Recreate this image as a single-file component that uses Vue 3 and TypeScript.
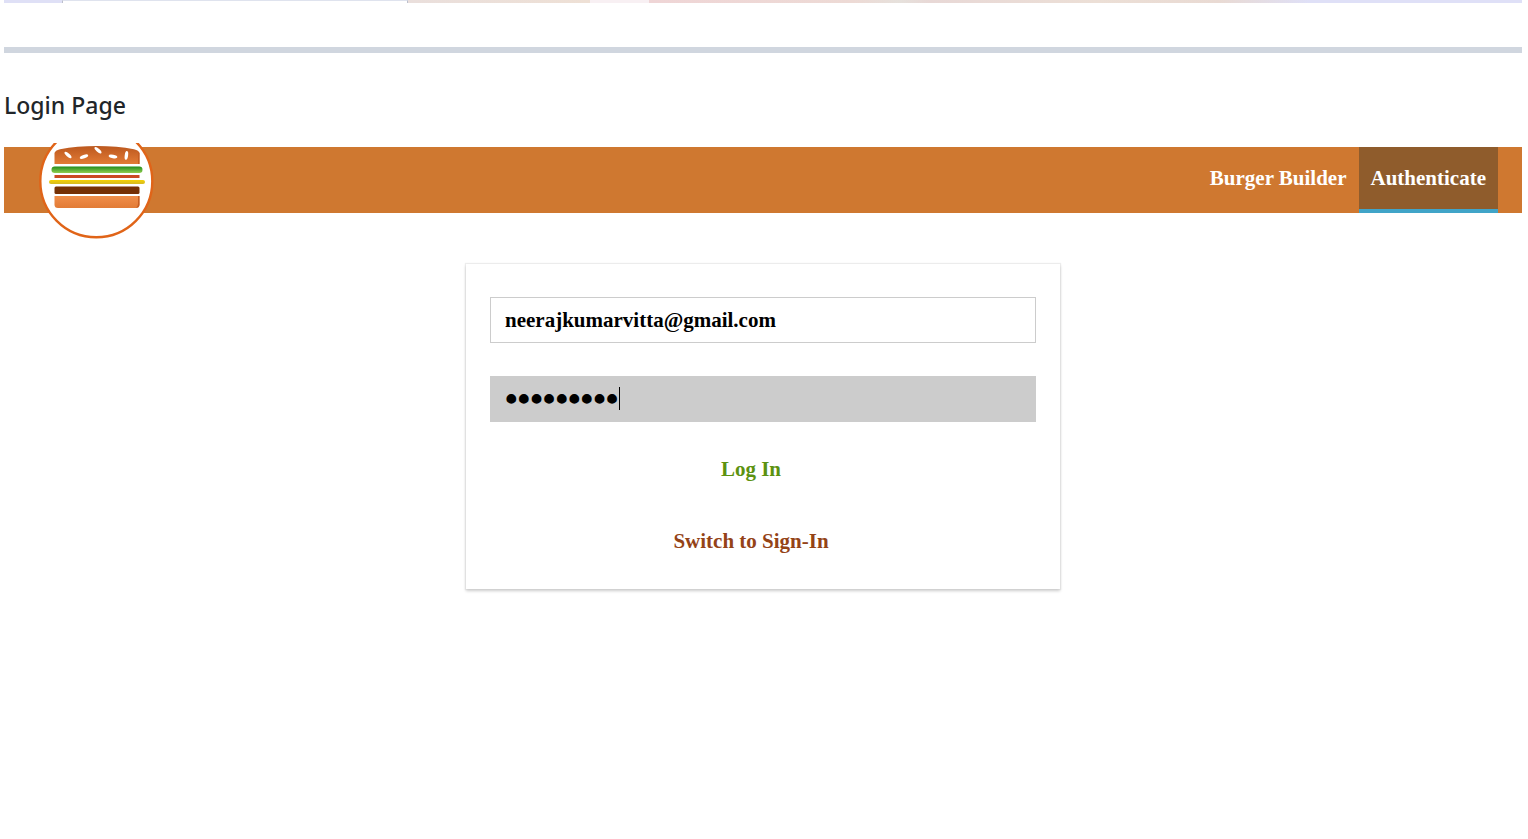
<script setup lang="ts">
import { onMounted, ref } from 'vue'

interface NavLink {
  label: string
  active: boolean
}

const links: NavLink[] = [
  { label: 'Burger Builder', active: false },
  { label: 'Authenticate', active: true },
]

const email = ref('neerajkumarvitta@gmail.com')
const password = ref('burger123')
const passwordBox = ref<HTMLInputElement | null>(null)

onMounted(() => {
  const box = passwordBox.value
  if (box) {
    box.focus()
    box.setSelectionRange(box.value.length, box.value.length)
  }
})
</script>

<template>
  <div class="page">
    <div class="strip"><span class="strip-tab"></span></div>
    <hr class="divider" />
    <h2 class="title">Login Page</h2>

    <header class="toolbar">
      <svg class="logo" viewBox="0 0 116 96" role="img" aria-label="Burger">
        <defs>
          <linearGradient id="bun-top" x1="0" y1="0" x2="0" y2="1">
            <stop offset="0" stop-color="#bc581e" />
            <stop offset="1" stop-color="#e27b36" />
          </linearGradient>
          <linearGradient id="salad" x1="0" y1="0" x2="0" y2="1">
            <stop offset="0" stop-color="#228c1d" />
            <stop offset="1" stop-color="#91ce50" />
          </linearGradient>
          <linearGradient id="cheese" x1="0" y1="0" x2="0" y2="1">
            <stop offset="0" stop-color="#f4d004" />
            <stop offset="1" stop-color="#d6bb22" />
          </linearGradient>
          <linearGradient id="bun-bottom" x1="0" y1="0" x2="0" y2="1">
            <stop offset="0" stop-color="#f08e4a" />
            <stop offset="1" stop-color="#e27b36" />
          </linearGradient>
        </defs>
        <circle cx="58.3" cy="38.3" r="56" fill="#fff" stroke="#e06418" stroke-width="2.4" />
        <path d="M16.500 21V10Q17 7.500 22 6.200C44 2 74 2 96 6.200Q101 7.500 101.500 10V21Z" fill="url(#bun-top)" />
        <path d="M100 8.500L101.500 10V21H100Z" fill="#c65d22" />
        <g fill="#fff">
          <ellipse cx="30" cy="12" rx="4.4" ry="1.7" transform="rotate(42 30 12)" />
          <ellipse cx="46" cy="13.700" rx="4.400" ry="1.700" transform="rotate(-20 46 13.700)" />
          <ellipse cx="60" cy="7.200" rx="4.400" ry="1.700" transform="rotate(42 60 7.200)" />
          <ellipse cx="75" cy="13.500" rx="4.400" ry="1.700" transform="rotate(10 75 13.500)" />
          <ellipse cx="88.400" cy="12.400" rx="4.400" ry="1.700" transform="rotate(-82 88.400 12.400)" />
        </g>
        <rect x="13.5" y="23.5" width="91" height="6.5" rx="3.2" fill="url(#salad)" />
        <rect x="16.5" y="32" width="85" height="3" fill="#cb4a23" />
        <rect x="11" y="37" width="96" height="4" rx="2" fill="url(#cheese)" />
        <rect x="16.5" y="43.5" width="85" height="7.5" rx="1.5" fill="#763005" />
        <path d="M16.500 53H101.500V61.500Q101.500 65 98 65H20Q16.500 65 16.500 61.500Z" fill="url(#bun-bottom)" />
        <path d="M100 53H101.500V61.500Q101.500 64.500 98 65Q100 63 100 61Z" fill="#c65d22" />
      </svg>
      <nav class="links">
        <a
          v-for="link in links"
          :key="link.label"
          href="#"
          class="link"
          :class="{ active: link.active }"
          >{{ link.label }}</a
        >
      </nav>
    </header>

    <form class="card" @submit.prevent>
      <input v-model="email" class="field" type="email" aria-label="Email address" />
      <div class="password">
        <input
          ref="passwordBox"
          v-model="password"
          class="field secret"
          type="password"
          aria-label="Password"
        />
        <span class="caret" aria-hidden="true"></span>
      </div>
      <div class="actions">
        <button class="action success" type="submit">Log In</button>
        <button class="action danger" type="button">Switch to Sign-In</button>
      </div>
    </form>
  </div>
</template>

<style>
body {
  background: #fff;
}
</style>

<style scoped>
.page {
  box-sizing: border-box;
  min-height: 100vh;
  padding: 0 6px 24px 4px;
  font-family: 'Liberation Serif', 'Times New Roman', serif;
  font-size: 21px;
  font-weight: bold;
}

.strip {
  height: 3px;
  background: linear-gradient(
    90deg,
    #dfe0f6 0 4%,
    #eadfdc 27%,
    #eee0d5 38.6%,
    #f8f0f3 38.6% 42.5%,
    #efd5d6 42.5%,
    #eddad5 56%,
    #e6e1dc 59%,
    #e8d8d6 61%,
    #ecdfd6 72%,
    #e9dad3 80%,
    #dfe0f7 86%
  );
}

.strip-tab {
  display: block;
  box-sizing: border-box;
  width: 346px;
  height: 3px;
  margin-left: 58px;
  border: 1px solid #bcbfcc;
  border-top-color: #dfe3ee;
  border-bottom: 0;
  background: #fff;
}

.divider {
  height: 6px;
  margin: 44px 0 0;
  border: 0;
  background: #d0d6df;
}

.title {
  margin: 36px 0 0;
  color: #212529;
  font-family: 'Noto Sans', 'Open Sans', sans-serif;
  font-size: 23px;
  font-weight: 500;
  line-height: 32px;
}

.toolbar {
  display: flex;
  justify-content: space-between;
  height: 66px;
  margin-top: 26px;
  padding: 0 24px 0 34px;
  background: #cf7830;
}

.logo {
  flex: none;
  width: 116px;
  height: 96px;
  margin-top: -4px;
}

.links {
  display: flex;
}

.link {
  box-sizing: border-box;
  padding: 0 12px;
  border-bottom: 4px solid transparent;
  color: #fff;
  line-height: 62px;
  text-decoration: none;
}

.link.active {
  border-bottom-color: #40a4c8;
  background: #8f5c2c;
}

.card {
  box-sizing: border-box;
  display: flex;
  flex-direction: column;
  gap: 33px;
  width: 100%;
  max-width: 594px;
  margin: 51px auto 0;
  padding: 33px 24px 24px;
  box-shadow: 0 2px 3px #ccc, 0 0 1px 1px #eee;
}

.field {
  display: block;
  box-sizing: border-box;
  width: 100%;
  height: 46px;
  padding: 0 14px;
  border: 1px solid #ccc;
  border-radius: 0;
  outline: none;
  background: #fff;
  color: #000;
  font: inherit;
}

.field:focus {
  background: #ccc;
}

.password {
  position: relative;
}

.secret {
  font-size: 36px;
  caret-color: transparent;
}

.caret {
  position: absolute;
  top: 11px;
  left: 129px;
  width: 1px;
  height: 23px;
  background: #000;
}

.actions {
  display: flex;
  flex-direction: column;
  align-items: center;
  gap: 24px;
  margin-right: 24px;
  margin-top: -10px;
}

.action {
  height: 48px;
  padding: 0 12px;
  border: 0;
  background: transparent;
  font: inherit;
  cursor: pointer;
}

.success {
  color: #5c9210;
}

.danger {
  color: #944317;
}
</style>
